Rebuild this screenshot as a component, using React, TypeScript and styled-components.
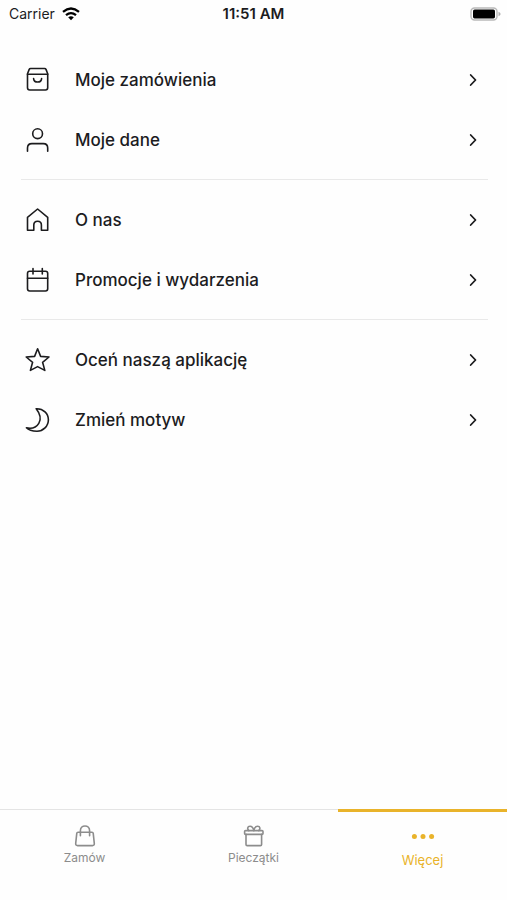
import React from "react";
import styled, { createGlobalStyle } from "styled-components";

const GlobalStyle = createGlobalStyle`
  *, *::before, *::after { box-sizing: border-box; }
  body {
    margin: 0;
    background: #fefefe;
    color: #1c1c1e;
    font-family: Inter, "Liberation Sans", sans-serif;
  }
`;

const Screen = styled.div`
  display: flex;
  flex-direction: column;
  min-height: 100vh;
`;

const StatusBar = styled.header`
  display: grid;
  grid-template-columns: 1fr auto 1fr;
  align-items: center;
  height: 28px;
  padding: 0 6px;
  font-size: 14px;
  line-height: 20px;
`;

const Carrier = styled.div`
  display: flex;
  align-items: center;
  gap: 7px;
  padding-left: 3px;
`;

const Clock = styled.time`
  font-size: 15px;
  font-weight: 600;
`;

const BatterySlot = styled.div`
  display: flex;
  justify-content: flex-end;
`;

const Menu = styled.main`
  flex: 1;
  padding: 22px 19px 0 21px;
`;

const Group = styled.ul`
  list-style: none;
  margin: 0;
  padding: 0;

  & + & {
    margin-top: 9px;
    padding-top: 10px;
    border-top: 1px solid #e9e9e9;
  }
`;

const RowButton = styled.button`
  display: flex;
  align-items: center;
  gap: 24px;
  width: 100%;
  height: 60px;
  padding: 0 7px 0 4px;
  border: 0;
  background: none;
  color: inherit;
  font: inherit;
  font-size: 17px;
  font-weight: 500;
  line-height: 24px;
  text-align: left;
  cursor: pointer;
`;

const RowLabel = styled.span`
  flex: 1;
`;

const TabBar = styled.nav`
  display: grid;
  grid-template-columns: repeat(3, 1fr);
  height: 91px;
`;

const Tab = styled.a<{ $active?: boolean }>`
  display: flex;
  flex-direction: column;
  align-items: center;
  gap: ${(p) => (p.$active ? "5px" : "3px")};
  padding-top: ${(p) => (p.$active ? "13px" : "15px")};
  border-top: ${(p) => (p.$active ? "3px solid #e9b32a" : "1px solid #e4e4e4")};
  color: ${(p) => (p.$active ? "#e9b32a" : "#8c8c8c")};
  font-size: ${(p) => (p.$active ? "13px" : "12px")};
  line-height: 16px;
  text-decoration: none;
`;

const LineIcon = styled.svg`
  flex: none;
  fill: none;
  stroke: currentColor;
  stroke-width: 1.6;
  stroke-linecap: round;
  stroke-linejoin: round;
`;

const RowIcon = ({ children }: { children: React.ReactNode }) => (
  <LineIcon width="26" height="26" viewBox="0 0 26 26" aria-hidden="true">
    {children}
  </LineIcon>
);

const TabIcon = ({ children }: { children: React.ReactNode }) => (
  <LineIcon width="22" height="22" viewBox="0 0 22 22" aria-hidden="true">
    {children}
  </LineIcon>
);

const groups = [
  [
    {
      label: "Moje zamówienia",
      icon: (
        <>
          <path d="M2.5 6.8 4.2 2.4Q4.6 1.5 5.6 1.5H19.6Q20.6 1.5 21 2.4L22.7 6.8V20.8Q22.7 23 20.5 23H4.7Q2.5 23 2.5 20.8Z" />
          <path d="M2.5 7.2H22.7" />
          <path d="M8.6 11.6C9 16.2 16.2 16.2 16.6 11.6" />
        </>
      ),
    },
    {
      label: "Moje dane",
      icon: (
        <>
          <circle cx="12.6" cy="6.7" r="4.9" />
          <path d="M2.5 24.2V21Q2.5 16.6 6.9 16.6H18.3Q22.7 16.6 22.7 21V24.2" />
        </>
      ),
    },
  ],
  [
    {
      label: "O nas",
      icon: (
        <path d="M2.5 10.3 12.6 2 22.7 10.3V23.2H16.4V18C16.4 13 8.8 13 8.8 18V23.2H2.5Z" />
      ),
    },
    {
      label: "Promocje i wydarzenia",
      icon: (
        <>
          <rect x="2.5" y="4.2" width="20.2" height="19.8" rx="2.2" />
          <path d="M2.5 11.2H22.7M8 1.5V7M17.3 1.5V7" />
        </>
      ),
    },
  ],
  [
    {
      label: "Oceń naszą aplikację",
      icon: (
        <path d="M12.6 1.8 15.6 9.4 24 10 17.6 15.3 19.8 23.4 12.6 19.6 5.4 23.4 7.6 15.3 1.2 10 9.6 9.4Z" />
      ),
    },
    {
      label: "Zmień motyw",
      icon: (
        <path d="M11.2 1.7C18.4 1.4 23.4 6.6 23.4 12.8 23.4 19.2 18.2 24.2 12 24.2 7.6 24.2 3.8 23.4 1.4 20.8 7 22 11.6 20 13.8 16.4 16.6 11.6 14.6 6 11.2 1.7Z" />
      ),
    },
  ],
];

const Wifi = () => (
  <svg width="18" height="14" viewBox="0 0 18 14" role="img" aria-label="Wi-Fi">
    <g fill="none" stroke="#000" strokeWidth="2.3">
      <path d="M1 4.8Q9-1.8 17 4.8" />
      <path d="M4 8.2Q9 4 14 8.2" />
    </g>
    <path d="M6.2 10.3Q9 8.2 11.8 10.3L9 13.3Z" />
  </svg>
);

const Battery = () => (
  <svg width="31" height="14" viewBox="0 0 31 14" role="img" aria-label="Bateria">
    <rect x="1" y="1" width="26" height="12" rx="3.5" fill="#fff" stroke="#b9b9b9" strokeWidth="1.4" />
    <rect x="3" y="2.6" width="22" height="8.8" rx="1.6" />
    <path d="M28.5 4.8Q30.6 5.6 30.6 7T28.5 9.2Z" fill="#b0b0b0" />
  </svg>
);

const Chevron = () => (
  <svg width="16" height="16" viewBox="0 0 16 16" aria-hidden="true">
    <path d="M5.7 3 10.5 8 5.7 13" fill="none" stroke="#1c1c1e" strokeWidth="1.8" strokeLinecap="round" strokeLinejoin="round" />
  </svg>
);

export default function App() {
  return (
    <Screen>
      <GlobalStyle />
      <StatusBar>
        <Carrier>
          Carrier
          <Wifi />
        </Carrier>
        <Clock>11:51 AM</Clock>
        <BatterySlot>
          <Battery />
        </BatterySlot>
      </StatusBar>
      <Menu>
        {groups.map((rows) => (
          <Group key={rows[0].label}>
            {rows.map((row) => (
              <li key={row.label}>
                <RowButton type="button">
                  <RowIcon>{row.icon}</RowIcon>
                  <RowLabel>{row.label}</RowLabel>
                  <Chevron />
                </RowButton>
              </li>
            ))}
          </Group>
        ))}
      </Menu>
      <TabBar>
        <Tab href="#zamow">
          <TabIcon>
            <path d="M4 7.2H18Q19 7.2 19.2 8.2L20.3 18.4Q20.5 20.6 18.4 20.6H3.6Q1.5 20.6 1.7 18.4L2.8 8.2Q3 7.2 4 7.2Z" />
            <path d="M6.4 10.8V5.8C6.4-.6 15.6-.6 15.6 5.8V10.8" />
          </TabIcon>
          Zamów
        </Tab>
        <Tab href="#pieczatki">
          <TabIcon>
            <rect x="1.6" y="5.6" width="18.4" height="3.8" rx="1" />
            <path d="M3 9.4V19.4Q3 20.6 4.2 20.6H17.4Q18.6 20.6 18.6 19.4V9.4" />
            <path d="M10.8 5.6C10.2 2.6 8.8 1.2 7 1.2 4.2 1.2 4.2 4.2 5.8 5.6M10.8 5.6C11.4 2.6 12.8 1.2 14.6 1.2 17.4 1.2 17.4 4.2 15.8 5.6" />
          </TabIcon>
          Pieczątki
        </Tab>
        <Tab href="#wiecej" $active aria-current="page">
          <svg width="24" height="22" viewBox="0 0 24 22" fill="currentColor" aria-hidden="true">
            <circle cx="3.4" cy="11.5" r="2.5" />
            <circle cx="12" cy="11.5" r="2.5" />
            <circle cx="20.6" cy="11.5" r="2.5" />
          </svg>
          Więcej
        </Tab>
      </TabBar>
    </Screen>
  );
}
